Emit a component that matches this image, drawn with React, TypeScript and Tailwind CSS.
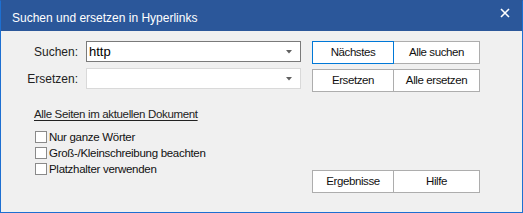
import React from "react";

function Combo({ value, active }: { value?: string; active?: boolean }) {
  return (
    <div
      className={`w-[215px] h-[21px] bg-white border flex items-center justify-between pl-[2px] pr-[8px] ${
        active ? "border-[#7a7a7a]" : "border-[#d9d9d9]"
      }`}
    >
      <span className="text-[13px] text-[#000] leading-none">{value ?? ""}</span>
      <svg width="6" height="4" viewBox="0 0 6 4">
        <path d="M0 0 H6 L3 3.5 Z" fill="#606060" />
      </svg>
    </div>
  );
}

function Btn({ label, focus, first }: { label: string; focus?: boolean; first?: boolean }) {
  return (
    <div
      className={`h-[23px] bg-white border flex items-center justify-center text-[11.5px] text-[#111] tracking-[-0.4px] ${
        first ? "w-[82px]" : "w-[87px] -ml-px"
      } ${focus ? "border-[#0078d7] relative z-10" : "border-[#adadad]"}`}
    >
      {label}
    </div>
  );
}

function Check({ label }: { label: string }) {
  return (
    <div className="flex items-center h-[16px]">
      <div className="w-[12px] h-[12px] bg-white border border-[#8a8a8a]" />
      <span className="ml-[2px] text-[11.5px] tracking-[-0.3px] text-[#111]">{label}</span>
    </div>
  );
}

export default function App() {
  return (
    <div className="w-[523px] h-[213px] flex flex-col bg-[#f0f0f0] border border-[#1d6fd1] border-t-[#2b579a] font-['Liberation_Sans',Arial,sans-serif] overflow-hidden">
      <div className="h-[30px] shrink-0 bg-[#2b579a] flex items-center justify-between pl-[11px] pr-[12px] text-white">
        <span className="text-[12px] pt-[3px]">Suchen und ersetzen in Hyperlinks</span>
        <svg width="10" height="10" viewBox="0 0 10 10" className="-mt-[6px]">
          <path d="M1 1 L9 9 M9 1 L1 9" stroke="#fff" strokeWidth="1.6" />
        </svg>
      </div>
      <div className="flex flex-1">
        <div className="flex flex-col pt-[10px] w-[311px]">
          <div className="flex items-center">
            <span className="w-[77px] text-right text-[12px] text-[#222]">Suchen:</span>
            <div className="ml-[8px]">
              <Combo value="http" active />
            </div>
          </div>
          <div className="flex items-center mt-[6px]">
            <span className="w-[77px] text-right text-[12px] text-[#222]">Ersetzen:</span>
            <div className="ml-[8px]">
              <Combo />
            </div>
          </div>
          <div className="ml-[33px] mt-[17px] text-[11.5px] tracking-[-0.35px] text-[#222] underline underline-offset-2">
            Alle Seiten im aktuellen Dokument
          </div>
          <div className="ml-[34px] mt-[6px] flex flex-col">
            <Check label="Nur ganze Wörter" />
            <Check label="Groß-/Kleinschreibung beachten" />
            <Check label="Platzhalter verwenden" />
          </div>
        </div>
        <div className="flex flex-col pt-[10px]">
          <div className="flex">
            <Btn label="Nächstes" first focus />
            <Btn label="Alle suchen" />
          </div>
          <div className="flex mt-[5px]">
            <Btn label="Ersetzen" first />
            <Btn label="Alle ersetzen" />
          </div>
          <div className="flex mt-[78px]">
            <Btn label="Ergebnisse" first />
            <Btn label="Hilfe" />
          </div>
        </div>
      </div>
    </div>
  );
}
